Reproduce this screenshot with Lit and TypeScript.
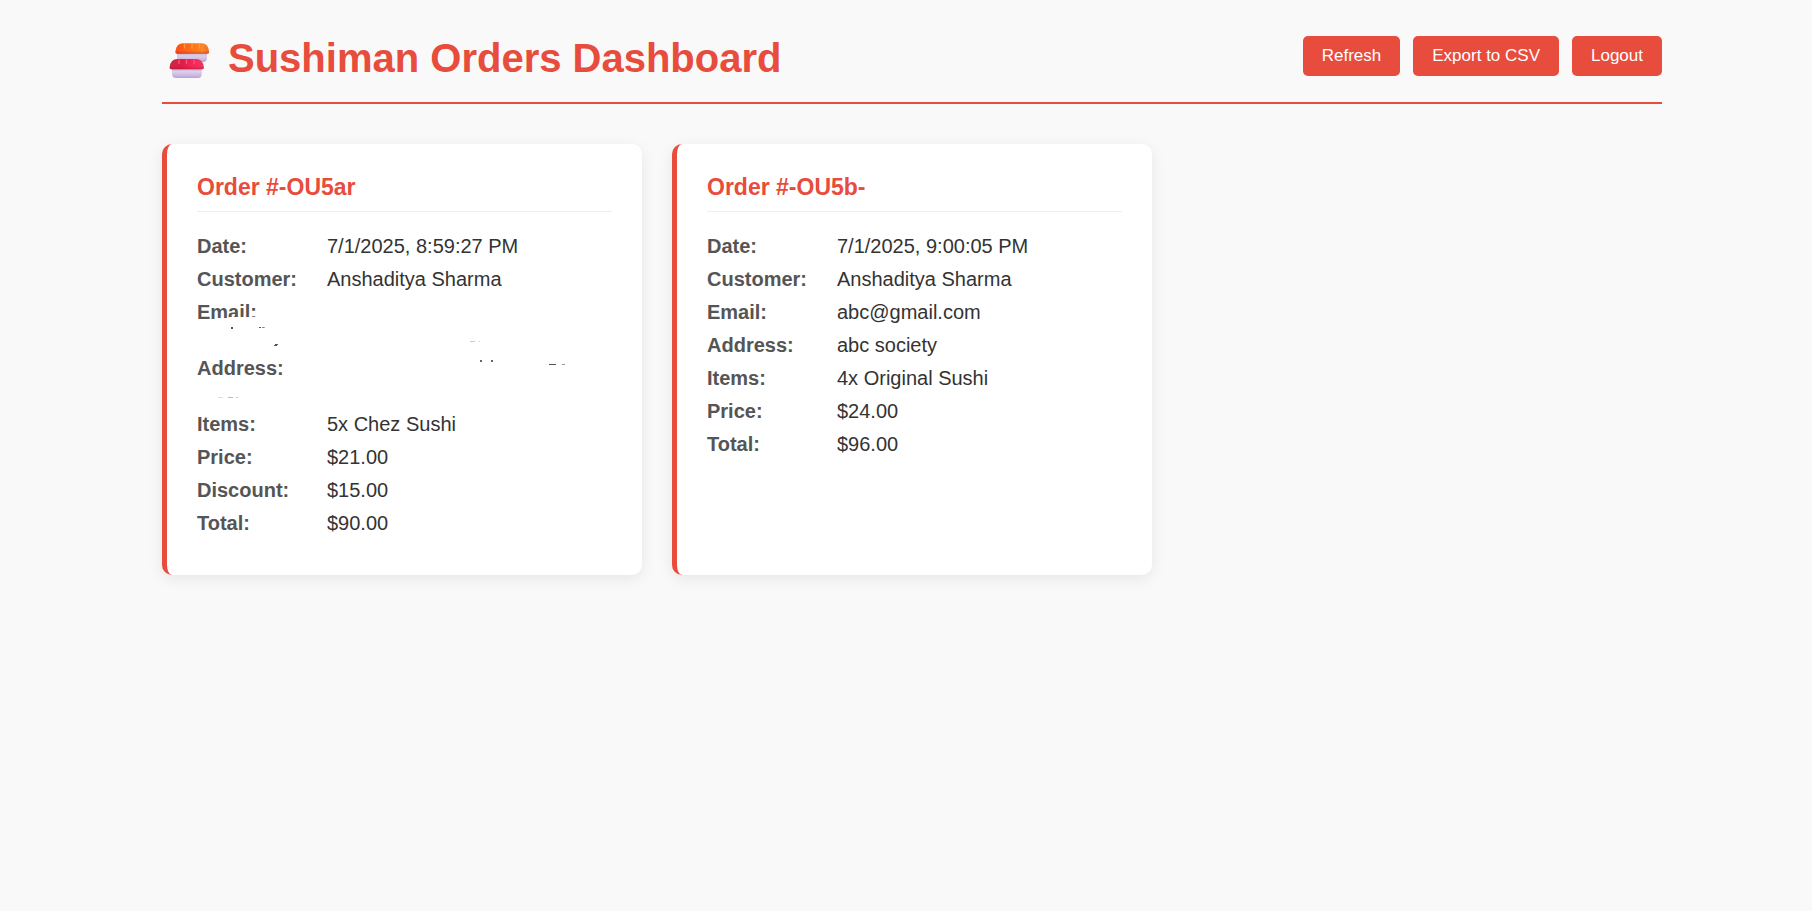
import { LitElement, html, css, svg, nothing } from "lit";
import { customElement, property } from "lit/decorators.js";

interface Field {
  label: string;
  value: string;
  hidden?: boolean;
}

interface Order {
  id: string;
  redacted: boolean;
  fields: Field[];
}

const ORDERS: Order[] = [
  {
    id: "-OU5ar",
    redacted: true,
    fields: [
      { label: "Date", value: "7/1/2025, 8:59:27 PM" },
      { label: "Customer", value: "Anshaditya Sharma" },
      { label: "Email", value: "", hidden: true },
      { label: "Address", value: "", hidden: true },
      { label: "Items", value: "5x Chez Sushi" },
      { label: "Price", value: "$21.00" },
      { label: "Discount", value: "$15.00" },
      { label: "Total", value: "$90.00" },
    ],
  },
  {
    id: "-OU5b-",
    redacted: false,
    fields: [
      { label: "Date", value: "7/1/2025, 9:00:05 PM" },
      { label: "Customer", value: "Anshaditya Sharma" },
      { label: "Email", value: "abc@gmail.com" },
      { label: "Address", value: "abc society" },
      { label: "Items", value: "4x Original Sushi" },
      { label: "Price", value: "$24.00" },
      { label: "Total", value: "$96.00" },
    ],
  },
];

// Traces left around the blanked-out values: [x, y, width, height, colour]
const TRACES: [number, number, number, number, string][] = [
  [34, 92, 2, 2, "#555"],
  [62, 92, 2, 1, "#555"],
  [65, 92, 2, 1, "#888"],
  [67, 92, 1, 1, "#aaa"],
  [78, 109, 3, 1, "#555"],
  [77, 110, 3, 1, "#555"],
  [273, 106, 5, 1, "#ccc"],
  [282, 106, 1, 1, "#ccc"],
  [283, 125, 2, 2, "#666"],
  [294, 125, 2, 2, "#666"],
  [352, 129, 7, 1, "#555"],
  [365, 129, 3, 1, "#999"],
  [21, 162, 5, 1, "#ddd"],
  [31, 162, 5, 1, "#bbb"],
  [39, 162, 2, 1, "#ccc"],
];

@customElement("order-card")
export class OrderCard extends LitElement {
  @property({ attribute: false }) order!: Order;

  static styles = css`
    :host {
      display: block;
      box-sizing: border-box;
      padding: 30px;
      background: #fff;
      border-left: 5px solid #e74c3c;
      border-radius: 10px;
      box-shadow: 0 4px 15px rgba(0, 0, 0, 0.08);
    }
    .title {
      margin: 0 0 23px;
      padding-bottom: 10px;
      border-bottom: 1px solid #eee;
      color: #e74c3c;
      font-size: 23px;
      line-height: 27px;
    }
    .fields {
      position: relative;
      margin: 0;
    }
    .field {
      display: flex;
      margin-bottom: 10px;
      line-height: 23px;
    }
    .field.hidden {
      min-height: 46px;
    }
    .label {
      flex: 0 0 130px;
      color: #555;
      font-weight: bold;
    }
    .value {
      margin: 0;
      min-width: 0;
      overflow-wrap: anywhere;
    }
    .traces {
      position: absolute;
      left: 0;
      top: 0;
      width: 415px;
      height: 200px;
      pointer-events: none;
    }
  `;

  render() {
    return html`
      <h3 class="title">Order #${this.order.id}</h3>
      <dl class="fields">
        ${this.order.fields.map(
          (f) => html`<div class="field ${f.hidden ? "hidden" : ""}">
            <dt class="label">${f.label}:</dt>
            <dd class="value">${f.value}</dd>
          </div>`
        )}
        ${this.order.redacted
          ? html`<svg class="traces" viewBox="0 0 415 200" aria-hidden="true" shape-rendering="crispEdges">
              <path fill="#fff" d="M20 84V83H32V82H60V90H20Z" />
              ${TRACES.map(
                ([x, y, w, h, c]) => svg`<rect x=${x} y=${y} width=${w} height=${h} fill=${c}></rect>`
              )}
            </svg>`
          : nothing}
      </dl>
    `;
  }
}

@customElement("app-root")
export class AppRoot extends LitElement {
  static styles = css`
    :host {
      display: block;
      box-sizing: border-box;
      min-height: 100vh;
      padding: 36px 0 36px 12px;
      background: #f9f9f9;
      color: #333;
      font-family: "Liberation Sans", Arial, sans-serif;
      font-size: 20px;
    }
    .page {
      max-width: 1500px;
      margin: 0 auto;
    }
    .header {
      display: flex;
      flex-wrap: wrap;
      justify-content: space-between;
      align-items: flex-start;
      gap: 12px;
      margin-bottom: 40px;
      padding-bottom: 20px;
      border-bottom: 2px solid #e74c3c;
    }
    .heading {
      display: flex;
      align-items: flex-start;
      gap: 11px;
      margin: 0;
      color: #e74c3c;
      font-size: 40px;
      line-height: 44px;
    }
    .sushi {
      flex: none;
      width: 55px;
      height: 46px;
    }
    .actions {
      display: flex;
      gap: 13px;
    }
    .button {
      height: 40px;
      padding: 0 19px;
      border: 0;
      border-radius: 5px;
      background: #e74c3c;
      color: #fff;
      font-family: inherit;
      font-size: 17px;
      cursor: pointer;
    }
    .button:hover {
      background: #c0392b;
    }
    .orders {
      display: grid;
      grid-template-columns: repeat(auto-fill, minmax(min(400px, 100%), 1fr));
      gap: 30px;
    }
  `;

  render() {
    return html`
      <main class="page">
        <header class="header">
          <h1 class="heading">
            <svg class="sushi" viewBox="0 0 55 46" aria-hidden="true">
              <defs>
                <linearGradient id="rice" x1="0" y1="0" x2="0" y2="1">
                  <stop offset="0" stop-color="#b9a3cf" />
                  <stop offset="0.35" stop-color="#dccfea" />
                  <stop offset="0.75" stop-color="#cbb8e0" />
                  <stop offset="1" stop-color="#b99fd6" />
                </linearGradient>
                <linearGradient id="salmon" x1="0" y1="0" x2="1" y2="0">
                  <stop offset="0" stop-color="#fc4f1c" />
                  <stop offset="0.4" stop-color="#ff6a1c" />
                  <stop offset="0.8" stop-color="#ff8526" />
                  <stop offset="1" stop-color="#f26a30" />
                </linearGradient>
                <linearGradient id="tuna" x1="0" y1="0" x2="1" y2="0">
                  <stop offset="0" stop-color="#c42a48" />
                  <stop offset="0.35" stop-color="#e01c48" />
                  <stop offset="0.75" stop-color="#fb2860" />
                  <stop offset="1" stop-color="#e83a5c" />
                </linearGradient>
                <linearGradient id="shade" x1="0" y1="0" x2="0" y2="1">
                  <stop offset="0.7" stop-color="#a01818" stop-opacity="0" />
                  <stop offset="1" stop-color="#a01818" stop-opacity="0.4" />
                </linearGradient>
              </defs>
              <path d="M15 16.500H45V22Q45 26 41 26H19Q15 26 15 22Z" fill="url(#rice)" />
              <path d="M13.300 16Q14 7.200 21 7.200H39.500Q46.500 7.200 47.200 16Q47.200 17.800 45.500 17.800H15Q13.300 17.800 13.300 16Z" fill="url(#salmon)" />
              <path d="M13.300 16Q14 7.200 21 7.200H39.500Q46.500 7.200 47.200 16Q47.200 17.800 45.500 17.800H15Q13.300 17.800 13.300 16Z" fill="url(#shade)" />
              <path d="M22.500 8V12M30 8V12M37.500 8V12" stroke="#ff9c38" stroke-width="1.300" stroke-linecap="round" />
              <path d="M10 32H39.700V38Q39.700 42 36 42H14Q10 42 10 38Z" fill="url(#rice)" />
              <path d="M7.600 31.500Q8.300 23 15.500 23H34Q41.200 23 41.900 31.500Q41.900 33.200 40.300 33.200H9.200Q7.600 33.200 7.600 31.500Z" fill="url(#tuna)" />
              <path d="M7.600 31.500Q8.300 23 15.500 23H34Q41.200 23 41.900 31.500Q41.900 33.200 40.300 33.200H9.200Q7.600 33.200 7.600 31.500Z" fill="url(#shade)" />
              <path d="M17 24V27.500M24.500 24V27.500M32 24V27.500" stroke="#ff5a68" stroke-width="1.300" stroke-linecap="round" />
            </svg>
            <span>Sushiman Orders Dashboard</span>
          </h1>
          <div class="actions">
            <button class="button" type="button">Refresh</button>
            <button class="button" type="button">Export to CSV</button>
            <button class="button" type="button">Logout</button>
          </div>
        </header>
        <section class="orders" aria-label="Orders">
          ${ORDERS.map((o) => html`<order-card .order=${o}></order-card>`)}
        </section>
      </main>
    `;
  }
}
